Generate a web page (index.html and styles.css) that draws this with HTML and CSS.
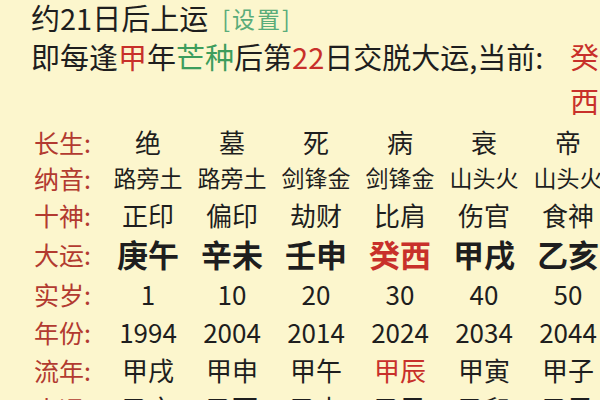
FILE: index.html
```html
<!DOCTYPE html>
<html lang="zh">
<head>
<meta charset="utf-8">
<link rel="stylesheet" href="styles.css">
</head>
<body>
<div class="page">
  <div class="line1">约21日后上运<span class="setting">[设置]</span></div>
  <div class="line2">
    <span class="intro">即每逢<span class="red">甲</span>年<span class="green">芒种</span>后第<span class="red">22</span>日交脱大运,当前:</span>
    <span class="current red">癸西</span>
  </div>
  <div class="table">
    <div class="row r36"><span class="label">长生:</span><span>绝</span><span>墓</span><span>死</span><span>病</span><span>衰</span><span>帝</span></div>
    <div class="row r36 small"><span class="label">纳音:</span><span>路旁土</span><span>路旁土</span><span>剑锋金</span><span>剑锋金</span><span>山头火</span><span>山头火</span></div>
    <div class="row r38"><span class="label">十神:</span><span>正印</span><span>偏印</span><span>劫财</span><span>比肩</span><span>伤官</span><span>食神</span></div>
    <div class="row r40 bold"><span class="label">大运:</span><span>庚午</span><span>辛未</span><span>壬申</span><span class="red">癸西</span><span>甲戌</span><span>乙亥</span></div>
    <div class="row r39"><span class="label">实岁:</span><span>1</span><span>10</span><span>20</span><span>30</span><span>40</span><span>50</span></div>
    <div class="row r38"><span class="label">年份:</span><span>1994</span><span>2004</span><span>2014</span><span>2024</span><span>2034</span><span>2044</span></div>
    <div class="row r38"><span class="label">流年:</span><span>甲戌</span><span>甲申</span><span>甲午</span><span class="red">甲辰</span><span>甲寅</span><span>甲子</span></div>
    <div class="row r38"><span class="label">小运:</span><span>乙亥</span><span>乙酉</span><span>乙未</span><span>乙巳</span><span>乙卯</span><span>乙丑</span></div>
  </div>
</div>
</body>
</html>
```

FILE: styles.css
```css
html, body {
  margin: 0;
  padding: 0;
  overflow: hidden;
  background: #fcf6cd;
}
body {
  width: 600px;
  height: 400px;
  font-family: "Noto Sans CJK SC", "Noto Sans", sans-serif;
  color: #1e1e1e;
}
.page {
  padding-left: 31px;
  width: 569px;
}
.line1 {
  font-size: 29px;
  line-height: 34px;
  height: 34px;
  white-space: nowrap;
}
.setting {
  font-size: 23px;
  color: #5aac7a;
  margin-left: 14px;
  letter-spacing: 2px;
  vertical-align: 2px;
}
.line2 {
  display: flex;
  justify-content: space-between;
  align-items: flex-start;
  font-size: 29px;
  line-height: 44px;
}
.intro {
  white-space: nowrap;
}
.current {
  width: 30px;
  word-break: break-all;
}
.red { color: #c8302a; }
.green { color: #3d9d5c; }
.table {
  margin-top: 2px;
  width: 620px;
}
.row {
  display: grid;
  grid-template-columns: 75px repeat(6, 84px);
  align-items: center;
  font-size: 26px;
  line-height: 1.2;
  white-space: nowrap;
}
.row > span {
  text-align: center;
}
.row > .label {
  text-align: left;
  padding-left: 3px;
  color: #b23a30;
  font-size: 25px;
  font-weight: 400;
}
.r36 { height: 36px; }
.r38 { height: 38px; }
.r39 { height: 39px; }
.r40 { height: 40px; }
.small > span { font-size: 23px; }
.small > .label { font-size: 25px; }
.bold > span {
  font-size: 31px;
  font-weight: 700;
}
```
